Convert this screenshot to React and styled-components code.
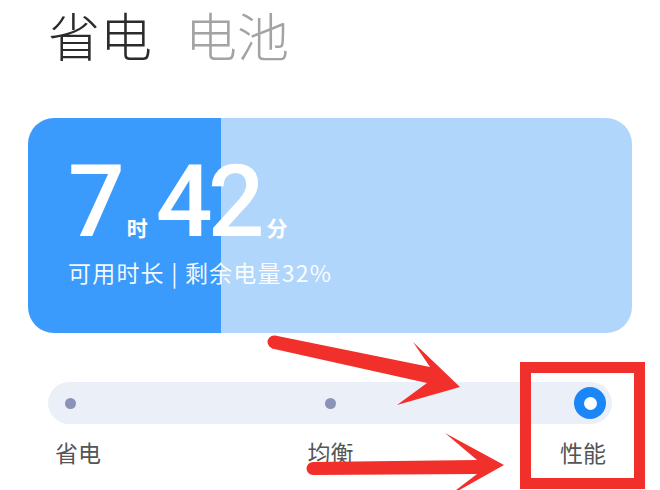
import React from "react";
import styled, { createGlobalStyle } from "styled-components";

const Global = createGlobalStyle`
  html, body { margin: 0; padding: 0; background: #fff; }
  body { font-family: "Noto Sans CJK SC", "Noto Sans", sans-serif; width: 660px; height: 490px; overflow: hidden; }
`;

const Page = styled.div`
  position: relative;
  width: 660px;
  height: 490px;
  padding: 0 28px;
  box-sizing: border-box;
`;

const Tabs = styled.div`
  display: flex;
  gap: 33px;
  padding-left: 20px;
`;

const Tab = styled.div`
  font-size: 52px;
  line-height: 70px;
  font-weight: 300;
  color: ${(p) => (p.$active ? "#2b2b2b" : "#a3a3a3")};
`;

const Card = styled.div`
  margin-top: 48px;
  height: 215px;
  border-radius: 26px;
  overflow: hidden;
  padding: 34px 0 0 40px;
  box-sizing: border-box;
  color: #fff;
`;

const TimeRow = styled.div`
  display: flex;
  align-items: baseline;
  height: 100px;
`;

const Num = styled.span`
  font-family: Roboto, "Noto Sans", sans-serif;
  font-weight: 500;
  font-size: 100px;
  line-height: 100px;
  letter-spacing: -5px;
`;

const Unit = styled.span`
  font-size: 21px;
  font-weight: 700;
  margin: 0 8px 0 7px;
`;

const Sub = styled.div`
  margin-top: 6px;
  font-size: 23px;
  line-height: 28px;
  letter-spacing: 1.2px;
  color: rgba(255, 255, 255, 0.95);
`;

const Track = styled.div`
  margin: 49px 0 0 20px;
  width: 564px;
  height: 42px;
  border-radius: 21px;
  background: #ebeff7;
  display: flex;
  justify-content: space-between;
  align-items: center;
  padding: 0 6px;
  box-sizing: border-box;
`;

const Slot = styled.div`
  width: 32px;
  height: 32px;
  display: flex;
  align-items: center;
  justify-content: center;
`;

const Dot = styled.div`
  width: 11px;
  height: 11px;
  border-radius: 50%;
  background: #8a92b8;
`;

const Selected = styled.div`
  width: 32px;
  height: 32px;
  border-radius: 50%;
  background: #1a86f8;
  display: flex;
  align-items: center;
  justify-content: center;
  &::after {
    content: "";
    width: 13px;
    height: 13px;
    border-radius: 50%;
    background: #fff;
  }
`;

const Labels = styled.div`
  display: flex;
  justify-content: space-between;
  margin: 13px 0 0 27px;
  width: 551px;
`;

const Label = styled.div`
  font-size: 23px;
  line-height: 30px;
  color: #555;
`;

const Overlay = styled.svg`
  position: absolute;
  left: 0;
  top: 0;
  pointer-events: none;
`;

const modes = ["省电", "均衡", "性能"];
const selected = 2;
const level = 32;

export default function App() {
  return (
    <>
      <Global />
      <Page>
        <Tabs>
          <Tab $active>省电</Tab>
          <Tab>电池</Tab>
        </Tabs>
        <Card
          style={{
            background: `linear-gradient(to right, #3b9bfd ${level}%, #b1d6fc ${level}%)`,
          }}
        >
          <TimeRow>
            <Num>7</Num>
            <Unit>时</Unit>
            <Num>42</Num>
            <Unit>分</Unit>
          </TimeRow>
          <Sub>可用时长 | 剩余电量{level}%</Sub>
        </Card>
        <Track>
          {modes.map((m, i) => (
            <Slot key={m}>{i === selected ? <Selected /> : <Dot />}</Slot>
          ))}
        </Track>
        <Labels>
          {modes.map((m) => (
            <Label key={m}>{m}</Label>
          ))}
        </Labels>
        <Overlay width="660" height="490" viewBox="0 0 660 490">
          <g fill="#f2302b">
            <circle cx="274" cy="342" r="6.5" />
            <polygon points="275,335.5 430,367 413,342 460,387 397,405 427,383 272,348.5" />
            <circle cx="313" cy="468.5" r="6.5" />
            <polygon points="313,462 477,460 445,433 504,465 447,497 477,474 313,475" />
          </g>
          <rect x="525.5" y="367.5" width="114" height="116" fill="none" stroke="#f2302b" strokeWidth="11" />
        </Overlay>
      </Page>
    </>
  );
}
